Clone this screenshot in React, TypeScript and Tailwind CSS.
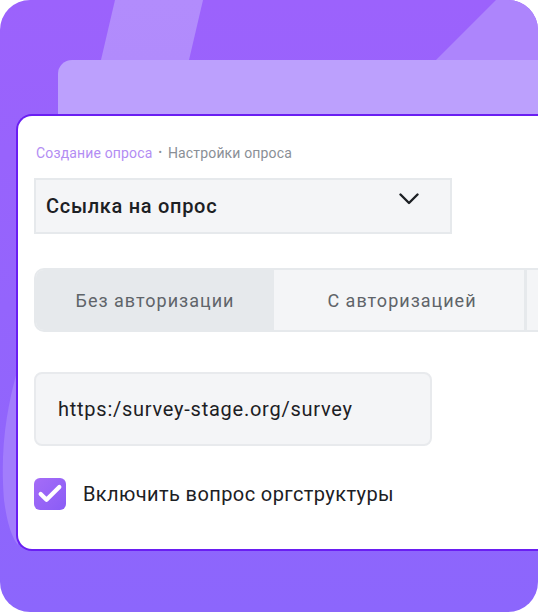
import { Check } from 'lucide-react'

function Backdrop() {
  return (
    <svg
      className="absolute inset-0"
      width="538"
      height="612"
      viewBox="0 0 538 612"
      fill="none"
    >
      <defs>
        <linearGradient id="bg" x1="0" y1="0" x2="0" y2="612" gradientUnits="userSpaceOnUse">
          <stop offset="0" stopColor="#9c62fc" />
          <stop offset="1" stopColor="#8c66fc" />
        </linearGradient>
        <linearGradient id="band" x1="0" y1="0" x2="0" y2="120" gradientUnits="userSpaceOnUse">
          <stop offset="0" stopColor="#b28cfc" />
          <stop offset="1" stopColor="#b08afc" />
        </linearGradient>
      </defs>
      <rect width="538" height="612" fill="url(#bg)" />
      <path d="M115 0 H203 L175 120 H87 Z" fill="url(#band)" />
      <path d="M496 0 H538 V120 L376 120 Z" fill="#ad85fc" />
      <path d="M18 368 C6 410 0 450 4 500 C8 530 14 540 18 545 Z" fill="#a27dfc" />
    </svg>
  )
}

export default function App() {
  return (
    <div className="h-[612px] w-[538px] bg-white font-['Roboto',sans-serif]">
      <div className="relative h-[612px] w-[538px] overflow-hidden rounded-[30px]">
        <Backdrop />

        <div className="relative flex flex-col">
          <div className="ml-[58px] mt-[60px] h-[56px] w-[520px] rounded-tl-[14px] bg-[#bca0fd]" />

          <div className="-mt-[2px] ml-4 h-[437px] w-[560px] rounded-l-[16px] border-2 border-r-0 border-[#6a1ef2] bg-white pl-4 pt-[27px]">
            <p className="flex items-center pl-[2px] text-[14px] leading-[20px] tracking-[0.15px]">
              <span className="text-[#b38df3]">Создание опроса</span>
              <span className="px-[6px] text-[10px] text-[#8a8f96]">•</span>
              <span className="text-[#8a8f96]">Настройки опроса</span>
            </p>

            <div className="mt-[15px] flex h-[56px] w-[418px] items-start justify-between border-2 border-[#e6e9ec] bg-[#f4f5f7] pl-[10px] pr-[31px]">
              <span className="mt-[11px] text-[20px] font-medium tracking-[0.7px] text-[#1c2024]">
                Ссылка на опрос
              </span>
              <svg width="20" height="12" viewBox="0 0 20 12" fill="none" className="mt-[13px]">
                <path d="M1.5 1.5 L10 10 L18.5 1.5" stroke="#1c2024" strokeWidth="2.4" strokeLinecap="round" strokeLinejoin="round" />
              </svg>
            </div>

            <div className="mt-[34px] flex h-[64px] w-[560px] overflow-hidden rounded-l-[10px] border-2 border-r-0 border-[#e6e9ec] bg-[#f4f5f7] text-[18px] tracking-[1px] text-[#5f6469]">
              <div className="flex w-[238px] items-center justify-center bg-[#e6e9ec]">
                Без авторизации
              </div>
              <div className="flex w-[250px] items-center justify-center pl-[6px]">
                С авторизацией
              </div>
              <div className="w-[3px] bg-[#e6e9ec]" />
              <div className="flex-1" />
            </div>

            <div className="mt-10 flex h-[74px] w-[398px] items-center rounded-[8px] border-2 border-[#e8eaed] bg-[#f4f5f7] pl-[22px] text-[20px] tracking-[0.75px] text-[#1c2024]">
              https:/survey-stage.org/survey
            </div>

            <label className="mt-8 flex items-center gap-[17px]">
              <span className="flex h-[32px] w-[32px] items-center justify-center rounded-[6px] bg-gradient-to-br from-[#a56cf7] to-[#8a5cf6]">
                <Check size={28} strokeWidth={3.6} className="text-white" />
              </span>
              <span className="text-[20px] tracking-[0.4px] text-[#1c2024]">
                Включить вопрос оргструктуры
              </span>
            </label>
          </div>
        </div>
      </div>
    </div>
  )
}
